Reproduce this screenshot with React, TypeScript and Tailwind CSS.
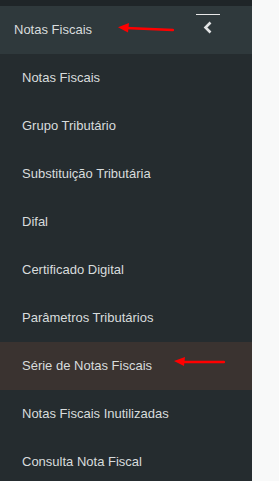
const items = [
  "Notas Fiscais",
  "Grupo Tributário",
  "Substituição Tributária",
  "Difal",
  "Certificado Digital",
  "Parâmetros Tributários",
  "Série de Notas Fiscais",
  "Notas Fiscais Inutilizadas",
  "Consulta Nota Fiscal",
];

function RedArrow({ width, slant = 0 }: { width: number; slant?: number }) {
  return (
    <svg width={width} height="12" viewBox={`0 0 ${width} 12`} className="shrink-0">
      <line x1="8" y1={6 - slant} x2={width - 1} y2={6 + slant} stroke="#ff0000" strokeWidth="2.5" strokeLinecap="round" />
      <polygon points={`0,${5 - slant * 0.8} 11,${1 - slant} 10,${10 - slant * 0.6}`} fill="#ff0000" />
    </svg>
  );
}

export default function App() {
  return (
    <div className="flex h-[481px] w-[279px] overflow-hidden bg-[#f8f9f9] font-['Liberation_Sans',sans-serif] text-[13px]">
      <aside className="flex w-[252px] shrink-0 flex-col bg-[#252c2f]">
        <div className="h-[6px] shrink-0 bg-[#1f2528]" />
        {/* Header */}
        <div className="flex h-[48px] shrink-0 items-center bg-[#2f393c] pl-[14px] pr-[32px] text-[#d8dcdd]">
          <span>Notas Fiscais</span>
          <span className="ml-[26px] mt-[-3px]">
            <RedArrow width={56} slant={1} />
          </span>
          <div className="ml-auto flex flex-col items-center">
            <div className="mt-[-12px] h-[1px] w-[24px] bg-[#e8e8e8]" />
            <svg width="10" height="13" viewBox="0 0 10 13" className="mt-[6px]">
              <path d="M7.5 1.5 L2.5 6.5 L7.5 11.5" fill="none" stroke="#e2e4e5" strokeWidth="2.6" />
            </svg>
          </div>
        </div>
        {items.map((item) => {
          const active = item === "Série de Notas Fiscais";
          return (
            <div
              key={item}
              className={`flex h-[48px] shrink-0 items-center pl-[22px] text-[#d8dcdd] ${active ? "bg-[#3a3330]" : ""}`}
            >
              <span>{item}</span>
              {active && (
                <span className="ml-[22px] mt-[-8px]">
                  <RedArrow width={51} />
                </span>
              )}
            </div>
          );
        })}
      </aside>
      <div className="flex-1" />
    </div>
  );
}
